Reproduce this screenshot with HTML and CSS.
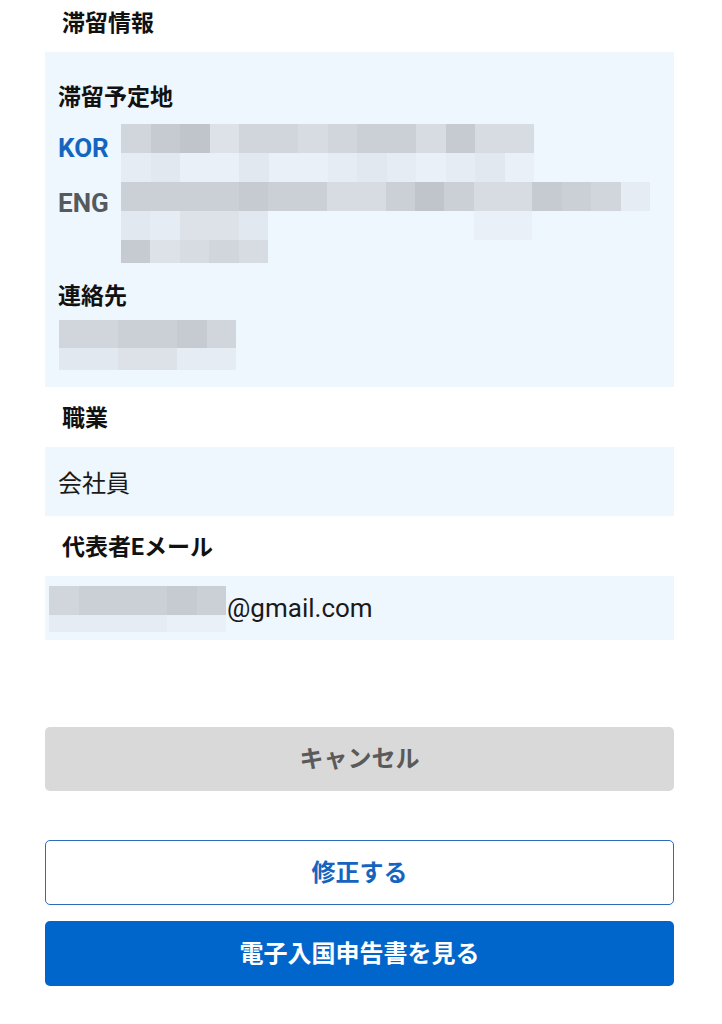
FILE: index.html
```html
<!DOCTYPE html>
<html lang="ja">
<head>
<meta charset="utf-8">
<title>滞留情報</title>
<link rel="stylesheet" href="styles.css">
</head>
<body>
<main class="page">
  <h2 class="title first">滞留情報</h2>
  <section class="panel panel-stay">
    <h3 class="sub-label">滞留予定地</h3>
    <div class="addr-row kor-row">
      <span class="lang lang-kor">KOR</span>
      <div class="mosaic mosaic-kor">
        <i class="k4"></i><i class="k2"></i><i class="k1"></i><i class="k6"></i><i class="k4"></i><i class="k4"></i><i class="k5"></i><i class="k4"></i><i class="k3"></i><i class="k3"></i><i class="k5"></i><i class="k2"></i><i class="k5"></i><i class="k5"></i>
        <i class="k8"></i><i class="k7"></i><i class="k9"></i><i class="k9"></i><i class="k7"></i><i class="k9"></i><i class="k9"></i><i class="k8"></i><i class="k7"></i><i class="k8"></i><i class="k9"></i><i class="k8"></i><i class="k7"></i><i class="k9"></i>
      </div>
    </div>
    <div class="addr-row eng-row">
      <span class="lang lang-eng">ENG</span>
      <div class="mosaic mosaic-eng">
        <i class="k3"></i><i class="k3"></i><i class="k3"></i><i class="k3"></i><i class="k2"></i><i class="k3"></i><i class="k3"></i><i class="k5"></i><i class="k5"></i><i class="k3"></i><i class="k1"></i><i class="k3"></i><i class="k5"></i><i class="k5"></i><i class="k2"></i><i class="k3"></i><i class="k4"></i><i class="k8"></i>
        <i class="k7"></i><i class="k8"></i><i class="k6"></i><i class="k6"></i><i class="k7"></i><i></i><i></i><i></i><i></i><i></i><i></i><i></i><i class="k9"></i><i class="k9"></i><i></i><i></i><i></i><i></i>
        <i class="k2"></i><i class="k6"></i><i class="k5"></i><i class="k4"></i><i class="k5"></i>
      </div>
    </div>
    <h3 class="sub-label contact-label">連絡先</h3>
    <div class="mosaic mosaic-contact">
      <i class="k4"></i><i class="k4"></i><i class="k3"></i><i class="k3"></i><i class="k2"></i><i class="k4"></i>
      <i class="k7"></i><i class="k7"></i><i class="k6"></i><i class="k6"></i><i class="k8"></i><i class="k8"></i>
    </div>
  </section>

  <h2 class="title">職業</h2>
  <section class="panel panel-value">
    <p class="value">会社員</p>
  </section>

  <h2 class="title">代表者Eメール</h2>
  <section class="panel panel-email">
    <div class="mosaic mosaic-email">
      <i class="k4"></i><i class="k3"></i><i class="k3"></i><i class="k3"></i><i class="k2"></i><i class="k3"></i>
      <i class="k8"></i><i class="k8"></i><i class="k8"></i><i class="k8"></i><i class="k9"></i><i class="k9"></i>
    </div>
    <span class="email-domain">@gmail.com</span>
  </section>

  <div class="actions">
    <button class="btn btn-cancel" type="button">キャンセル</button>
    <div class="actions-main">
      <button class="btn btn-outline" type="button">修正する</button>
      <button class="btn btn-primary" type="button">電子入国申告書を見る</button>
    </div>
  </div>
</main>
</body>
</html>
```

FILE: styles.css
```css
* {
  box-sizing: border-box;
}

html, body {
  margin: 0;
  padding: 0;
  background: #ffffff;
}

body {
  font-family: Roboto, "Noto Sans CJK JP", sans-serif;
  color: #111111;
}

.page {
  width: 722px;
  padding: 0 48px 0 45px;
}

.title {
  margin: 0;
  padding: 18px 17px 14px;
  font-size: 23px;
  line-height: 28px;
  font-weight: 700;
}

.title.first {
  padding-top: 10px;
}

.panel {
  background: #eef6fe;
}

.panel-stay {
  padding: 32px 13px 17px;
}

.sub-label {
  margin: 0;
  font-size: 23px;
  line-height: 28px;
  font-weight: 700;
}

.addr-row {
  display: flex;
  align-items: flex-start;
}

.kor-row {
  margin-top: 12px;
}

.lang {
  width: 63px;
  flex: 0 0 63px;
  font-family: Roboto, sans-serif;
  font-weight: 700;
  font-size: 26px;
  line-height: 28px;
}

.lang-kor {
  color: #1565c0;
  margin-top: 10px;
}

.lang-eng {
  color: #555a5e;
  margin-top: 7px;
}

.mosaic {
  display: grid;
}

.mosaic i {
  display: block;
}

.mosaic-kor {
  grid-template-columns: repeat(14, 29.5px);
  grid-template-rows: 29px 29px;
}

.mosaic-eng {
  grid-template-columns: repeat(18, 29.4px);
  grid-template-rows: 29px 29px 23px;
}

.contact-label {
  margin-top: 20px;
}

.mosaic-contact {
  margin-top: 9px;
  margin-left: 1px;
  grid-template-columns: repeat(6, 29.5px);
  grid-template-rows: 28px 22px;
}

.panel-value {
  padding: 22px 13px 17px;
}

.value {
  margin: 0;
  font-size: 24px;
  line-height: 30px;
  font-weight: 400;
  color: #1a1a1a;
}

.panel-email {
  display: flex;
  align-items: flex-start;
  padding: 10px 4px 8px;
}

.mosaic-email {
  grid-template-columns: repeat(6, 29.5px);
  grid-template-rows: 29px 17px;
}

.email-domain {
  margin-top: 7px;
  margin-left: 1px;
  font-family: Roboto, sans-serif;
  font-size: 26px;
  line-height: 30px;
  color: #1a1a1a;
}

.k1 { background: #c0c5cc; }
.k2 { background: #c6cbd2; }
.k3 { background: #cbd0d7; }
.k4 { background: #d1d6dd; }
.k5 { background: #d7dce3; }
.k6 { background: #dde2e9; }
.k7 { background: #e2e8ef; }
.k8 { background: #e6ecf3; }
.k9 { background: #eaf0f7; }

.actions {
  padding-top: 87px;
}

.actions-main {
  display: flex;
  flex-direction: column;
  gap: 16px;
  margin-top: 49px;
}

.btn {
  display: block;
  width: 100%;
  height: 64px;
  margin: 0;
  border: none;
  border-radius: 5px;
  font-family: Roboto, "Noto Sans CJK JP", sans-serif;
  font-size: 24px;
  font-weight: 700;
  line-height: 30px;
  padding: 0;
}

.btn-cancel {
  background: #d9d9d9;
  color: #5a5a5a;
}

.btn-outline {
  height: 65px;
  background: #ffffff;
  border: 1.5px solid #2c6cb8;
  color: #1565c0;
}

.btn-primary {
  height: 65px;
  background: #0066cc;
  color: #ffffff;
}
```
